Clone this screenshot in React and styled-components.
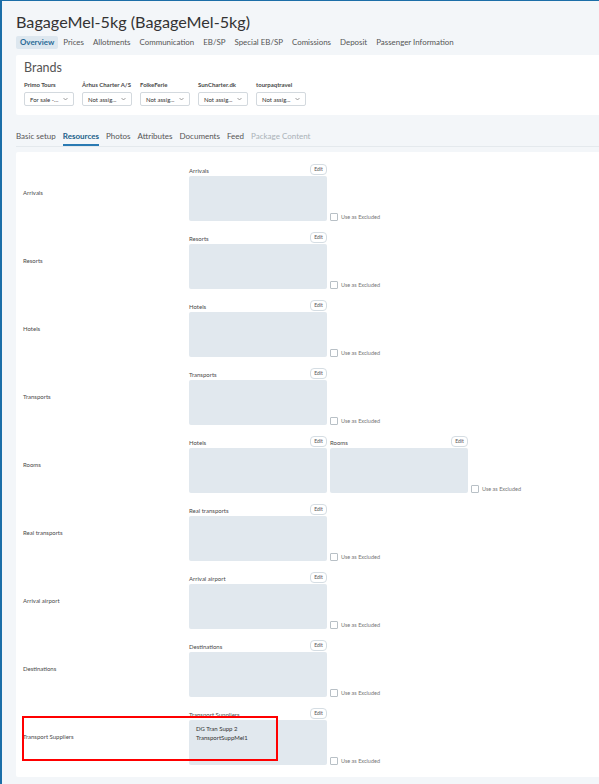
import React from "react";
import styled, { createGlobalStyle } from "styled-components";

const GlobalStyle = createGlobalStyle`
  html, body {
    margin: 0;
    padding: 0;
    background: #f3f6f9;
    font-family: "Lato", "Open Sans", sans-serif;
    color: #333;
  }
  * { box-sizing: border-box; }
`;

const Page = styled.div`
  position: relative;
  min-height: 784px;
  border-left: 2px solid #1b6ea8;
  border-top: 1px solid #1b6ea8;
  padding-left: 14px;
  overflow: hidden;
`;

const Title = styled.h1`
  margin: 0;
  padding-top: 10px;
  font-size: 16.2px;
  line-height: 22px;
  font-weight: 400;
  color: #333;
`;

const SubNav = styled.nav`
  display: flex;
  align-items: center;
  gap: 1px;
  margin-top: 2px;
  height: 14px;
`;

const SubNavItem = styled.span`
  font-size: 7.9px;
  line-height: 13px;
  padding: 0 4px;
  border-radius: 2px;
  color: ${(p) => (p.$active ? "#2a6b97" : "#555")};
  background: ${(p) => (p.$active ? "#dde7ef" : "transparent")};
  font-weight: ${(p) => (p.$active ? 700 : 400)};
  white-space: nowrap;
`;

const Card = styled.section`
  background: #fff;
  border-radius: 2px 0 0 2px;
  margin-right: -4px;
`;

const BrandsCard = styled(Card)`
  margin-top: 6px;
  height: 60px;
  padding: 6px 8px;
`;

const CardTitle = styled.h2`
  margin: 0;
  font-size: 12.5px;
  line-height: 14px;
  font-weight: 400;
  color: #555;
`;

const BrandRow = styled.div`
  display: flex;
  gap: 8px;
  margin-top: 6px;
`;

const Brand = styled.div`
  width: 50px;
  display: flex;
  flex-direction: column;
`;

const BrandLabel = styled.span`
  font-size: 6px;
  line-height: 8px;
  font-weight: 700;
  color: #4a4a4a;
  white-space: nowrap;
`;

const Select = styled.div`
  margin-top: 3px;
  height: 14px;
  border: 1px solid #d3d9de;
  border-radius: 2px;
  display: flex;
  align-items: center;
  justify-content: space-between;
  padding: 0 5px;
  font-size: 6px;
  color: #333;
  white-space: nowrap;
`;

const Chevron = () => (
  <svg width="5" height="4" viewBox="0 0 10 6">
    <path d="M1 1l4 4 4-4" fill="none" stroke="#777" strokeWidth="1.4" />
  </svg>
);

const Tabs = styled.nav`
  display: flex;
  align-items: flex-end;
  gap: 7px;
  margin-top: 15px;
  height: 17px;
  border-bottom: 1px solid #e4e9ed;
`;

const Tab = styled.span`
  font-size: 8px;
  line-height: 12px;
  padding-bottom: 2px;
  white-space: nowrap;
  color: ${(p) => (p.$active ? "#215f8a" : p.$disabled ? "#aab2b8" : "#555")};
  font-weight: ${(p) => (p.$active ? 700 : 400)};
  border-bottom: 2px solid ${(p) => (p.$active ? "#2a7ab3" : "transparent")};
`;

const ResourcesCard = styled(Card)`
  margin-top: 5px;
  padding: 11px 7px 12px 7px;
  display: flex;
  flex-direction: column;
  gap: 10px;
`;

const Row = styled.div`
  display: grid;
  grid-template-columns: 166px 1fr;
  align-items: center;
  height: 58px;
`;

const RowLabel = styled.span`
  font-size: 6px;
  color: #4a4a4a;
`;

const Fields = styled.div`
  display: flex;
  align-items: flex-end;
  gap: 3px;
`;

const Field = styled.div`
  width: 138px;
  display: flex;
  flex-direction: column;
`;

const FieldHead = styled.div`
  height: 13px;
  display: flex;
  align-items: center;
  justify-content: space-between;
`;

const FieldTitle = styled.span`
  font-size: 6px;
  color: #4a4a4a;
  padding-top: 2px;
`;

const EditButton = styled.span`
  width: 17px;
  height: 11px;
  border: 1px solid #d5dde3;
  border-radius: 4px;
  font-size: 5px;
  line-height: 9px;
  text-align: center;
  color: #555;
  background: #fff;
`;

const Box = styled.div`
  height: 45px;
  background: #e1e8ee;
  border-radius: 2px;
  padding: 4px 7px;
  display: flex;
  flex-direction: column;
`;

const BoxItem = styled.span`
  font-size: 6px;
  line-height: 9px;
  color: #333;
`;

const Exclude = styled.label`
  display: flex;
  align-items: center;
  gap: 3px;
  font-size: 5.5px;
  color: #777;
  white-space: nowrap;
`;

const Check = styled.span`
  width: 8px;
  height: 8px;
  border: 1px solid #b8c0c6;
  border-radius: 1px;
  background: #fff;
`;

const Annotation = styled.div`
  position: absolute;
  left: 20px;
  top: 715px;
  width: 256px;
  height: 45px;
  border: 2px solid #ff0000;
  pointer-events: none;
`;

const subNav = [
  "Overview",
  "Prices",
  "Allotments",
  "Communication",
  "EB/SP",
  "Special EB/SP",
  "Comissions",
  "Deposit",
  "Passenger Information",
];

const brands = [
  { name: "Primo Tours", value: "For sale -..." },
  { name: "Århus Charter A/S", value: "Not assig..." },
  { name: "FolkeFerie", value: "Not assig..." },
  { name: "SunCharter.dk", value: "Not assig..." },
  { name: "tourpaqtravel", value: "Not assig..." },
];

const tabs = [
  { name: "Basic setup" },
  { name: "Resources", active: true },
  { name: "Photos" },
  { name: "Attributes" },
  { name: "Documents" },
  { name: "Feed" },
  { name: "Package Content", disabled: true },
];

const rows = [
  { label: "Arrivals", fields: [{ title: "Arrivals" }] },
  { label: "Resorts", fields: [{ title: "Resorts" }] },
  { label: "Hotels", fields: [{ title: "Hotels" }] },
  { label: "Transports", fields: [{ title: "Transports" }] },
  { label: "Rooms", fields: [{ title: "Hotels" }, { title: "Rooms" }] },
  { label: "Real transports", fields: [{ title: "Real transports" }] },
  { label: "Arrival airport", fields: [{ title: "Arrival airport" }] },
  { label: "Destinations", fields: [{ title: "Destinations" }] },
  {
    label: "Transport Suppliers",
    fields: [
      {
        title: "Transport Suppliers",
        items: ["DG Tran Supp 2", "TransportSuppMel1"],
      },
    ],
  },
];

export default function App() {
  return (
    <>
      <GlobalStyle />
      <Page>
        <Title>BagageMel-5kg (BagageMel-5kg)</Title>
        <SubNav>
          {subNav.map((s, i) => (
            <SubNavItem key={s} $active={i === 0}>
              {s}
            </SubNavItem>
          ))}
        </SubNav>

        <BrandsCard>
          <CardTitle>Brands</CardTitle>
          <BrandRow>
            {brands.map((b) => (
              <Brand key={b.name}>
                <BrandLabel>{b.name}</BrandLabel>
                <Select>
                  <span>{b.value}</span>
                  <Chevron />
                </Select>
              </Brand>
            ))}
          </BrandRow>
        </BrandsCard>

        <Tabs>
          {tabs.map((t) => (
            <Tab key={t.name} $active={t.active} $disabled={t.disabled}>
              {t.name}
            </Tab>
          ))}
        </Tabs>

        <ResourcesCard>
          {rows.map((r) => (
            <Row key={r.label}>
              <RowLabel>{r.label}</RowLabel>
              <Fields>
                {r.fields.map((f, i) => (
                  <Field key={i}>
                    <FieldHead>
                      <FieldTitle>{f.title}</FieldTitle>
                      <EditButton>Edit</EditButton>
                    </FieldHead>
                    <Box>
                      {(f.items || []).map((it) => (
                        <BoxItem key={it}>{it}</BoxItem>
                      ))}
                    </Box>
                  </Field>
                ))}
                <Exclude>
                  <Check />
                  Use as Excluded
                </Exclude>
              </Fields>
            </Row>
          ))}
        </ResourcesCard>
        <Annotation />
      </Page>
    </>
  );
}
